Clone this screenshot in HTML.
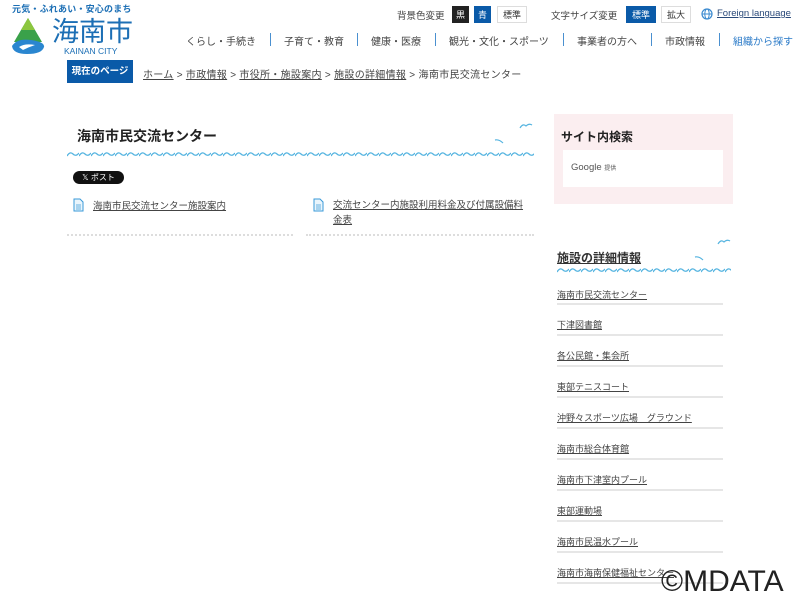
<!DOCTYPE html>
<html><head><meta charset="utf-8"><style>
*{margin:0;padding:0;box-sizing:border-box}
body{width:800px;height:600px;background:#fff;position:relative;overflow:hidden;font-family:"Liberation Sans","Noto Sans CJK JP",sans-serif;color:#333}
.a{position:absolute;white-space:nowrap}
.u{text-decoration:underline}
.btn{position:absolute;font-size:9px;height:17px;line-height:17px;text-align:center;border:1px solid #ddd}
.nav{font-size:10px;color:#444;top:33px}
.sep{position:absolute;top:33px;width:1px;height:13px;background:#4a90d0}
.side{position:absolute;left:557px;font-size:9px;color:#444;text-decoration:underline}
.sl{position:absolute;left:557px;width:166px;height:2px;background:#e6e6e6}
</style></head><body>
<div class="a" style="left:12px;top:2px;font-size:9px;font-weight:bold;color:#1c6fb5;letter-spacing:0.2px">元気・ふれあい・安心のまち</div>
<svg class="a" style="left:9px;top:16px" width="38" height="40" viewBox="0 0 38 40">
<path d="M19 2 L33 26 L5 26 Z" fill="#3aa14a"/><path d="M19 2 L26 14 L12 14Z" fill="#8cc63f"/>
<path d="M3 30 Q8 22 22 24 Q36 26 35 31 Q33 38 18 38 Q4 38 3 30Z" fill="#2a86d0"/>
<path d="M10 31 Q16 27 26 29 Q20 31 14 34Z" fill="#fff"/></svg>
<div class="a" style="left:52px;top:14px;font-size:27px;color:#1c6fb5;font-family:'Noto Sans CJK JP',sans-serif;line-height:32px">海南市</div>
<div class="a" style="left:64px;top:46px;font-size:8.5px;color:#1c6fb5">KAINAN CITY</div>

<div class="a" style="left:397px;top:8px;font-size:9.5px;color:#444">背景色変更</div>
<div class="btn" style="left:452px;top:6px;width:17px;background:#222;color:#fff;border-color:#222">黒</div>
<div class="btn" style="left:474px;top:6px;width:17px;background:#0a5aa8;color:#fff;border-color:#0a5aa8">青</div>
<div class="btn" style="left:497px;top:6px;width:30px;color:#333">標準</div>
<div class="a" style="left:551px;top:8px;font-size:9.5px;color:#444">文字サイズ変更</div>
<div class="btn" style="left:626px;top:6px;width:30px;background:#0a5aa8;color:#fff;border-color:#0a5aa8">標準</div>
<div class="btn" style="left:661px;top:6px;width:30px;color:#333">拡大</div>
<svg class="a" style="left:701px;top:8px" width="12" height="12" viewBox="0 0 12 12"><circle cx="6" cy="6" r="5" fill="none" stroke="#3a8ad0" stroke-width="1.2"/><ellipse cx="6" cy="6" rx="2.2" ry="5" fill="none" stroke="#3a8ad0"/><path d="M1 6H11" stroke="#3a8ad0"/></svg>
<div class="a u" style="left:717px;top:8px;font-size:9.5px;color:#2a4a7a">Foreign language</div>

<div class="a nav" style="left:186px">くらし・手続き</div><div class="sep" style="left:270px"></div>
<div class="a nav" style="left:284px">子育て・教育</div><div class="sep" style="left:357px"></div>
<div class="a nav" style="left:371px">健康・医療</div><div class="sep" style="left:435px"></div>
<div class="a nav" style="left:449px">観光・文化・スポーツ</div><div class="sep" style="left:563px"></div>
<div class="a nav" style="left:577px">事業者の方へ</div><div class="sep" style="left:651px"></div>
<div class="a nav" style="left:665px">市政情報</div><div class="sep" style="left:719px"></div>
<div class="a nav" style="left:733px;color:#2a7ac8">組織から探す</div>

<div class="a" style="left:67px;top:60px;width:66px;height:23px;background:#0a5aa8;color:#fff;font-size:9.5px;font-weight:bold;line-height:23px;text-align:center">現在のページ</div>
<div class="a" style="left:143px;top:66px;font-size:10px;color:#444;letter-spacing:0.3px"><span class="u">ホーム</span> &gt; <span class="u">市政情報</span> &gt; <span class="u">市役所・施設案内</span> &gt; <span class="u">施設の詳細情報</span> &gt; 海南市民交流センター</div>

<div class="a" style="left:77px;top:126px;font-size:14px;font-weight:bold;color:#222">海南市民交流センター</div>
<svg class="a" style="left:67px;top:150px" width="467" height="10"><defs><pattern id="w" width="12" height="10" patternUnits="userSpaceOnUse"><path d="M0 6 Q3 1 6 4 Q9 7 12 3" fill="none" stroke="#55b4e0" stroke-width="1.3"/></pattern></defs><rect width="467" height="10" fill="url(#w)"/></svg>
<svg class="a" style="left:490px;top:120px" width="45" height="30"><path d="M30 8 Q33 3 36 6 Q39 3 42 5" fill="none" stroke="#55b4e0" stroke-width="1.2"/><path d="M5 20 Q9 19 13 23" fill="none" stroke="#55b4e0" stroke-width="1.2"/></svg>

<div class="a" style="left:73px;top:171px;width:51px;height:13px;background:#111;border-radius:7px;color:#fff;font-size:8px;line-height:13px;text-align:center">𝕏 ポスト</div>

<svg class="a" style="left:73px;top:198px" width="11" height="14"><path d="M1 1H7L10 4V13H1Z" fill="#eaf5fc" stroke="#3a9ad8"/><path d="M3 7H8M3 9H8M3 11H8" stroke="#3a9ad8" stroke-width=".8"/></svg>
<div class="a u" style="left:93px;top:198px;font-size:9.5px;color:#444">海南市民交流センター施設案内</div>
<svg class="a" style="left:313px;top:198px" width="11" height="14"><path d="M1 1H7L10 4V13H1Z" fill="#eaf5fc" stroke="#3a9ad8"/><path d="M3 7H8M3 9H8M3 11H8" stroke="#3a9ad8" stroke-width=".8"/></svg>
<div class="a u" style="left:333px;top:198px;font-size:9.5px;color:#444;line-height:15px;white-space:normal;width:196px">交流センター内施設利用料金及び付属設備料金表</div>
<div class="a" style="left:67px;top:234px;width:226px;border-top:2px dotted #ddd"></div>
<div class="a" style="left:306px;top:234px;width:228px;border-top:2px dotted #ddd"></div>

<div class="a" style="left:554px;top:114px;width:179px;height:90px;background:#fbeef0"></div>
<div class="a" style="left:561px;top:128px;font-size:12px;font-weight:bold;color:#222">サイト内検索</div>
<div class="a" style="left:563px;top:150px;width:160px;height:37px;background:#fff"></div>
<div class="a" style="left:571px;top:162px;font-size:9.5px;color:#555">Google <span style="font-size:6px">提供</span></div>

<div class="a u" style="left:557px;top:249px;font-size:12px;font-weight:bold;color:#333">施設の詳細情報</div>
<svg class="a" style="left:557px;top:266px" width="174" height="10"><rect width="174" height="10" fill="url(#w)"/></svg>
<svg class="a" style="left:690px;top:235px" width="45" height="30"><path d="M28 9 Q31 4 34 7 Q37 4 40 6" fill="none" stroke="#55b4e0" stroke-width="1.2"/><path d="M5 22 Q9 21 13 25" fill="none" stroke="#55b4e0" stroke-width="1.2"/></svg>

<div class="side" style="top:288px">海南市民交流センター</div><div class="sl" style="top:303px"></div>
<div class="side" style="top:318px">下津図書館</div><div class="sl" style="top:334px"></div>
<div class="side" style="top:349px">各公民館・集会所</div><div class="sl" style="top:365px"></div>
<div class="side" style="top:380px">東部テニスコート</div><div class="sl" style="top:396px"></div>
<div class="side" style="top:411px">沖野々スポーツ広場　グラウンド</div><div class="sl" style="top:427px"></div>
<div class="side" style="top:442px">海南市総合体育館</div><div class="sl" style="top:458px"></div>
<div class="side" style="top:473px">海南市下津室内プール</div><div class="sl" style="top:489px"></div>
<div class="side" style="top:504px">東部運動場</div><div class="sl" style="top:520px"></div>
<div class="side" style="top:535px">海南市民温水プール</div><div class="sl" style="top:551px"></div>
<div class="side" style="top:566px">海南市海南保健福祉センター</div><div class="sl" style="top:582px"></div>

<div class="a" style="left:661px;top:565px;font-size:30px;color:#222;line-height:34px">©MDATA</div>
</body></html>
